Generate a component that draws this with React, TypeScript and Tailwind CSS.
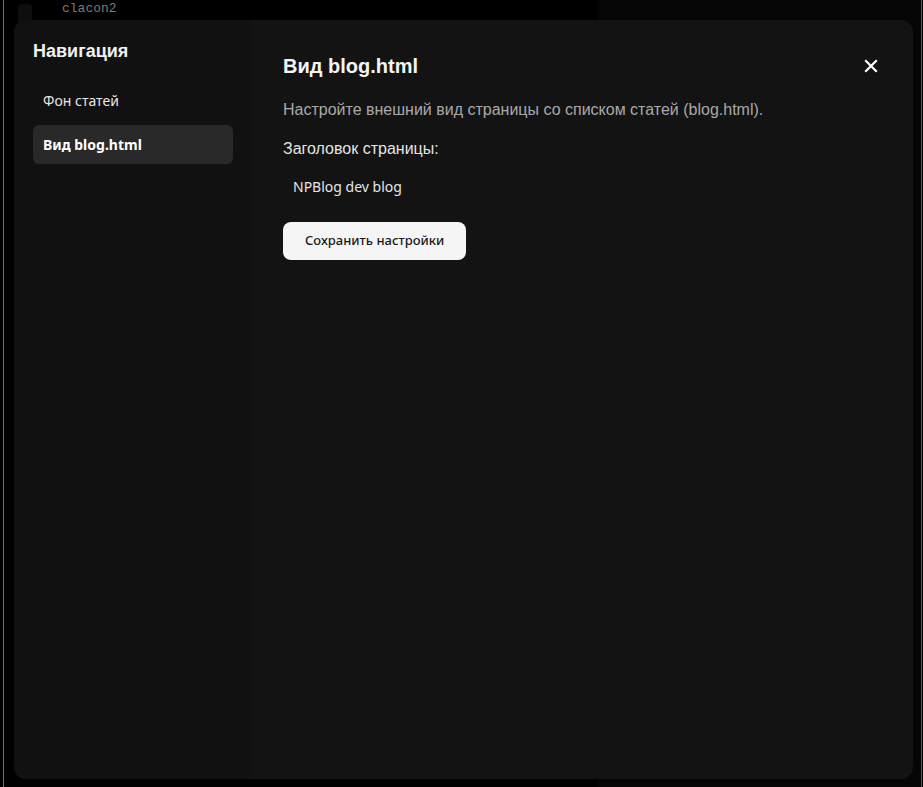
import { useState } from "react";

const navItems = [
  { id: "bg", label: "Фон статей" },
  { id: "blog", label: "Вид blog.html" },
];

export default function App() {
  const [active, setActive] = useState("blog");
  const [title, setTitle] = useState("NPBlog dev blog");

  return (
    <div className="relative h-screen w-full overflow-hidden bg-black">
      <div className="flex h-full">
        <div className="ml-[3px] w-px bg-[#6a6a6a]" />
        <div className="flex flex-1">
          <div className="flex w-[584px] items-start gap-[30px] pl-[14px]">
            <div className="mt-[4px] h-[26px] w-[14px] rounded-sm bg-[#0e0e0e]" />
            <span className="pt-[2px] font-['Liberation_Mono',monospace] text-[13px] leading-[14px] text-[#7a7a7a]">
              clacon2
            </span>
          </div>
          <div className="w-[10px] bg-[#000]" />
          <div className="flex-1 bg-[#050505]" />
        </div>
        <div className="mr-px w-px bg-[#5a5a5a]" />
      </div>

      {/* modal */}
      <div className="absolute inset-0 pb-[8px] pl-[14px] pr-[10px] pt-[20px]">
        <div className="flex h-full overflow-hidden rounded-xl bg-[#131313]">
          <aside className="w-[238px] shrink-0 bg-[#111111] px-[19px] pt-[19px]">
            <h2 className="font-['Liberation_Sans',Arial,sans-serif] text-[18px] font-bold leading-6 text-[#f2f2f2]">
              Навигация
            </h2>
            <nav className="mt-[18px] flex flex-col gap-[5px]">
              {navItems.map((item) => (
                <button
                  key={item.id}
                  onClick={() => setActive(item.id)}
                  className={
                    "h-[39px] w-[200px] rounded-md px-[10px] text-left font-['Noto_Sans',sans-serif] text-[14px] " +
                    (active === item.id
                      ? "bg-[#292929] font-bold text-white"
                      : "text-[#e6e6e6]")
                  }
                >
                  {item.label}
                </button>
              ))}
            </nav>
          </aside>

          <main className="flex-1 pl-[31px] pr-[30px] pt-[33px] font-['Liberation_Sans',Arial,sans-serif]">
            <div className="flex items-center justify-between">
              <h1 className="text-[20px] font-bold leading-[26px] text-[#f4f4f4]">
                Вид blog.html
              </h1>
              <button className="flex h-6 w-6 items-center justify-center text-white">
                <svg width="14" height="14" viewBox="0 0 14 14">
                  <path
                    d="M2 2 L12 12 M12 2 L2 12"
                    stroke="currentColor"
                    strokeWidth="2.2"
                    strokeLinecap="square"
                  />
                </svg>
              </button>
            </div>

            <p className="mt-[22px] text-[16px] leading-[18px] text-[#a9a9a9]">
              Настройте внешний вид страницы со списком статей (blog.html).
            </p>

            <label className="mt-[21px] block text-[16px] leading-[18px] text-[#e4e4e4]">
              Заголовок страницы:
            </label>
            <input
              value={title}
              onChange={(e) => setTitle(e.target.value)}
              className="mt-[12px] block h-[32px] w-[440px] bg-transparent px-[10px] font-['Noto_Sans',sans-serif] text-[14px] text-[#e6e6e6] outline-none"
            />

            <button className="mt-[20px] h-[38px] rounded-lg bg-[#f5f5f5] px-[22px] font-['Noto_Sans',sans-serif] text-[13px] font-medium text-[#1a1a1a]">
              Сохранить настройки
            </button>
          </main>
        </div>
      </div>
    </div>
  );
}
